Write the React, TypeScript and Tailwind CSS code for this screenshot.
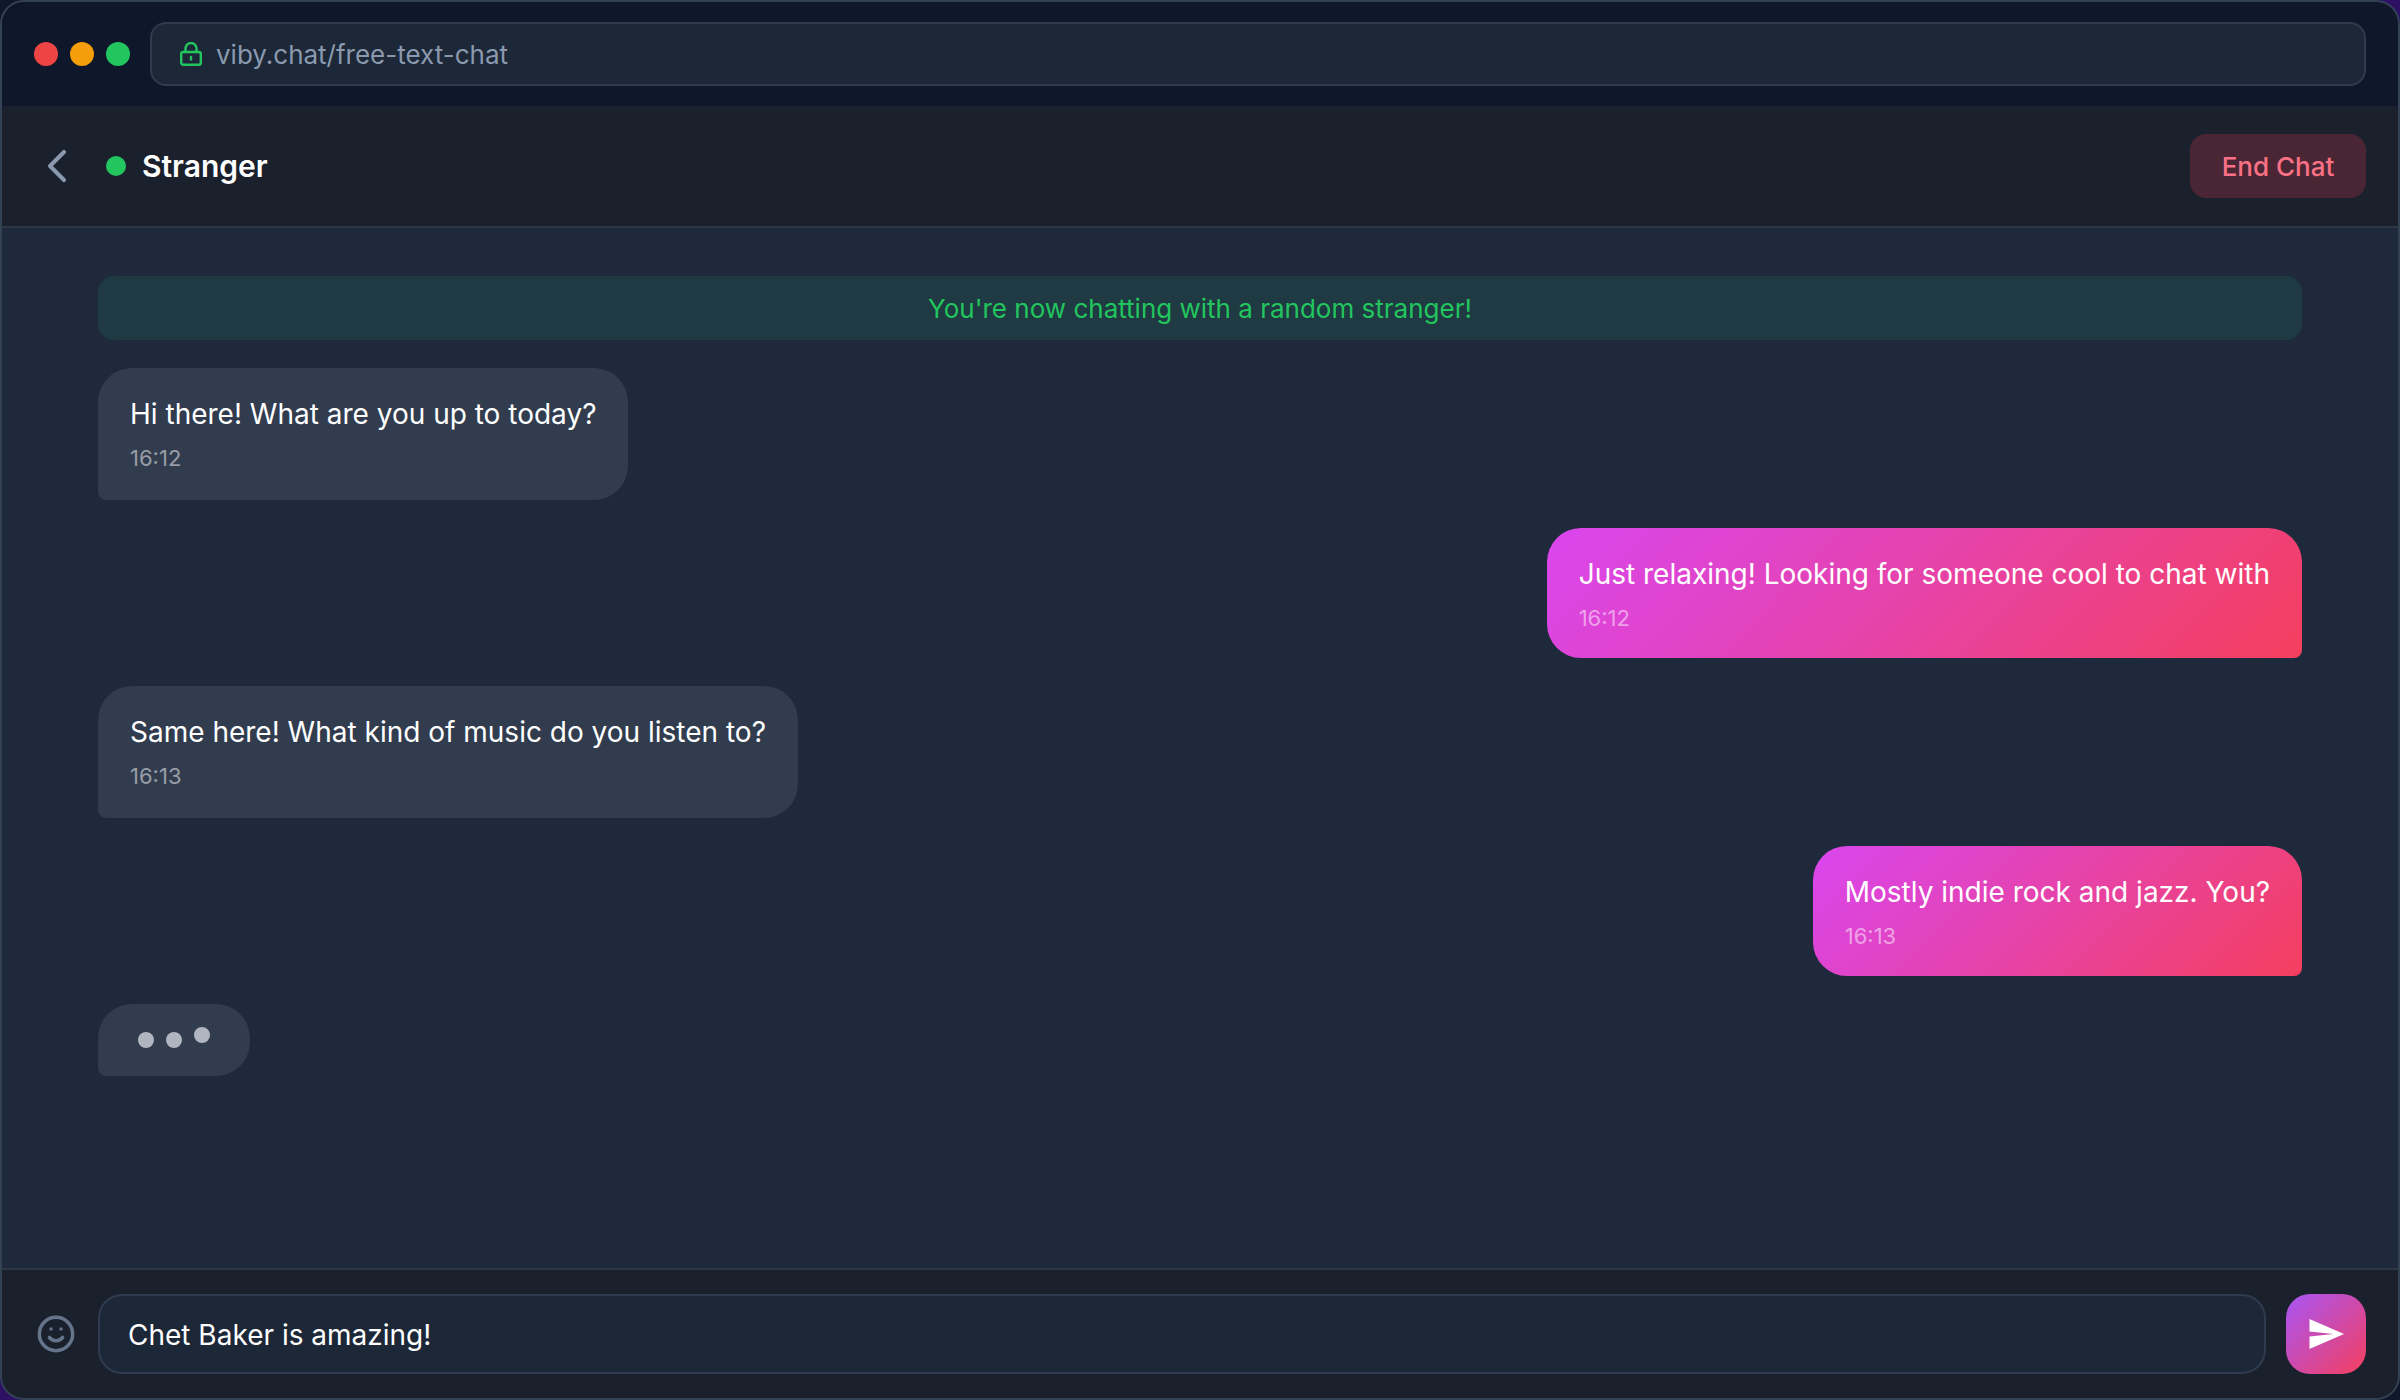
import { Smile, ChevronLeft } from 'lucide-react'

const MESSAGES = [
  { id: 1, mine: false, text: 'Hi there! What are you up to today?', time: '16:12', height: 'h-[132px]' },
  { id: 2, mine: true, text: 'Just relaxing! Looking for someone cool to chat with', time: '16:12', height: 'h-[130px]' },
  { id: 3, mine: false, text: 'Same here! What kind of music do you listen to?', time: '16:13', height: 'h-[132px]' },
  { id: 4, mine: true, text: 'Mostly indie rock and jazz. You?', time: '16:13', height: 'h-[130px]' },
]

function Bubble({ mine, text, time, height }: { mine: boolean; text: string; time: string; height: string }) {
  if (mine) {
    return (
      <div className="flex justify-end">
        <div className={`${height} rounded-[34px] rounded-br-[8px] bg-[linear-gradient(135deg,#d946ef,#f43f5e)] px-[32px] pt-[26px] text-white`}>
          <p className="text-[28px] leading-[40px]">{text}</p>
          <p className="mt-[8px] text-[22px] leading-[32px] text-white/50">{time}</p>
        </div>
      </div>
    )
  }
  return (
    <div className="flex justify-start">
      <div className={`${height} rounded-[34px] rounded-bl-[8px] bg-[#313c4e] px-[32px] pt-[26px] text-white`}>
        <p className="text-[28px] leading-[40px]">{text}</p>
        <p className="mt-[8px] text-[22px] leading-[32px] text-white/50">{time}</p>
      </div>
    </div>
  )
}

export default function App() {
  return (
    <div className="h-[1400px] w-[2400px] bg-gradient-to-br from-[#0f172a] via-[#2e1065] to-[#0f172a] font-['Inter',sans-serif]">
      <div className="flex h-full flex-col overflow-hidden rounded-[24px] border-2 border-[#334155] bg-[#1e293b]">
        {/* Browser bar */}
        <div className="flex h-[104px] shrink-0 items-center bg-[#0f172a] px-[32px]">
          <div className="flex gap-[12px]">
            <span className="h-[24px] w-[24px] rounded-full bg-[#ef4444]" />
            <span className="h-[24px] w-[24px] rounded-full bg-[#f59e0b]" />
            <span className="h-[24px] w-[24px] rounded-full bg-[#22c55e]" />
          </div>
          <div className="ml-[20px] flex h-[64px] flex-1 items-center rounded-[16px] border-2 border-[#2f3b4e] bg-[#1c2738] pl-[28px]">
            <svg width="22" height="24" viewBox="0 0 22 24" fill="none" stroke="#22c55e" strokeWidth="2.4" strokeLinecap="round" strokeLinejoin="round">
              <rect x="1.2" y="10" width="19.6" height="12.8" rx="2" />
              <path d="M5.5 10V6.5a5.5 5.5 0 0 1 11 0V10" />
              <path d="M11 15v2.5" />
            </svg>
            <span className="ml-[14px] text-[26px] text-[#8b99ae]">viby.chat/free-text-chat</span>
          </div>
        </div>

        {/* Chat header */}
        <div className="flex h-[122px] shrink-0 items-center justify-between border-b-2 border-[#2b3648] bg-[#1a202c] pl-[27px] pr-[32px]">
          <div className="flex items-center">
            <ChevronLeft size={56} strokeWidth={1.75} className="text-[#8b99ae]" />
            <span className="ml-[21px] h-[20px] w-[20px] rounded-full bg-[#22c55e]" />
            <span className="ml-[16px] pt-[1px] text-[30px] font-semibold text-white">Stranger</span>
          </div>
          <button className="flex h-[64px] w-[176px] items-center justify-center rounded-[16px] bg-[#4a2634] text-[26px] font-medium text-[#fb7185]">
            End Chat
          </button>
        </div>

        {/* Messages */}
        <div className="flex flex-1 flex-col gap-[28px] px-[96px] pt-[48px]">
          <div className="flex h-[64px] shrink-0 items-center justify-center rounded-[16px] bg-[#1f3a42] text-[26px] text-[#22c55e]">
            You're now chatting with a random stranger!
          </div>
          {MESSAGES.map((m) => (
            <Bubble key={m.id} mine={m.mine} text={m.text} time={m.time} height={m.height} />
          ))}
          <div className="flex h-[72px] w-[152px] items-center gap-[12px] rounded-[34px] rounded-bl-[8px] bg-[#313c4e] pl-[40px]">
            <span className="h-[16px] w-[16px] rounded-full bg-[#b0b5c0]" />
            <span className="h-[16px] w-[16px] rounded-full bg-[#b0b5c0]" />
            <span className="mb-[10px] h-[16px] w-[16px] rounded-full bg-[#b0b5c0]" />
          </div>
        </div>

        {/* Input */}
        <div className="flex h-[130px] shrink-0 items-center border-t-2 border-[#2b3648] bg-[#1a202c] pl-[34px] pr-[32px]">
          <Smile size={40} strokeWidth={2.1} className="text-[#64748b]" />
          <div className="ml-[22px] flex h-[80px] flex-1 items-center rounded-[24px] border-2 border-[#2f3b4e] bg-[#1c2738] pl-[28px] pt-[2px] text-[28px] text-white">
            Chet Baker is amazing!
          </div>
          <button className="ml-[20px] flex h-[80px] w-[80px] items-center justify-center rounded-[24px] bg-[linear-gradient(135deg,#a855f7,#f43f5e)]">
            <svg width="36" height="30" viewBox="0 0 24 20" fill="white">
              <path d="M1 0 L24 10 L1 20 V11.7 L17 10 L1 8.3 Z" />
            </svg>
          </button>
        </div>
      </div>
    </div>
  )
}
